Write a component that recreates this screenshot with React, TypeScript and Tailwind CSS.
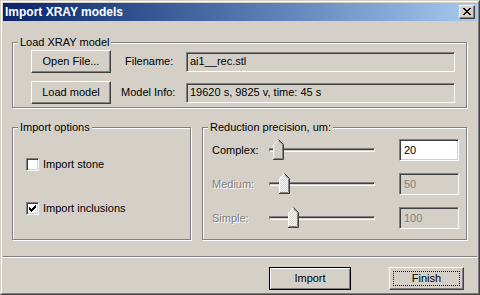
import React from "react";

const raised =
  "border border-t-white border-l-white border-r-[#404040] border-b-[#404040] shadow-[inset_-1px_-1px_0_#808080]";
const sunken =
  "border border-t-[#808080] border-l-[#808080] border-r-white border-b-white shadow-[inset_1px_1px_0_#404040,inset_-1px_-1px_0_#d4d0c8]";

function GroupBox({ label, className, children }: { label: string; className: string; children: React.ReactNode }) {
  return (
    <div className={`relative border border-[#808080] shadow-[1px_1px_0_#fff,inset_1px_1px_0_#fff] ${className}`}>
      <span className="absolute left-[5px] top-[-7px] bg-[#d4d0c8] px-[2px] leading-[13px]">{label}</span>
      {children}
    </div>
  );
}

function Thumb({ disabled, left }: { disabled?: boolean; left: string }) {
  return (
    <svg className={`absolute top-0 ${left}`} width="11" height="21" viewBox="0 0 11 21">
      <defs>
        <pattern id="dither" width="2" height="2" patternUnits="userSpaceOnUse">
          <rect width="2" height="2" fill="#d4d0c8" />
          <rect width="1" height="1" fill="#fff" />
          <rect x="1" y="1" width="1" height="1" fill="#fff" />
        </pattern>
      </defs>
      <polygon points="5.5,0.5 10.5,5.5 10.5,20.5 0.5,20.5 0.5,5.5" fill={disabled ? "url(#dither)" : "#d4d0c8"} />
      <polyline points="0.5,20 0.5,5.5 5.5,0.5" fill="none" stroke="#fff" />
      <polyline points="5.5,0.5 10.5,5.5 10.5,20.5 0,20.5" fill="none" stroke="#404040" />
      <polyline points="5.5,1.7 9.5,5.7 9.5,19.5 1,19.5" fill="none" stroke="#808080" />
    </svg>
  );
}

function SliderRow({
  label,
  value,
  thumb,
  disabled,
}: {
  label: string;
  value: string;
  thumb: string;
  disabled?: boolean;
}) {
  return (
    <div className="flex h-[22px] items-center">
      <div className={`w-[57px] ${disabled ? "text-[#808080] [text-shadow:1px_1px_0_#fff]" : ""}`}>{label}</div>
      {/* trackbar */}
      <div className="relative flex h-[22px] w-[106px] items-center">
        <div className="h-[4px] w-full border-t border-t-[#808080] border-b border-b-white border-l border-l-[#808080] border-r border-r-white shadow-[inset_0_1px_0_#404040]" />
        <Thumb disabled={disabled} left={thumb} />
      </div>
      <div
        className={`ml-[24px] flex h-[22px] w-[60px] items-center pl-[4px] ${sunken} ${
          disabled ? "bg-[#d4d0c8] text-[#808080]" : "bg-white"
        }`}
      >
        {value}
      </div>
    </div>
  );
}

function CheckBox({ label, checked }: { label: string; checked?: boolean }) {
  return (
    <div className="flex h-[13px] items-center">
      <div className={`relative h-[13px] w-[13px] bg-white ${sunken}`}>
        {checked && (
          <svg className="absolute left-[2px] top-[2px]" width="7" height="7" viewBox="0 0 7 7" shapeRendering="crispEdges">
            <path d="M0 2h1v3H0z M1 3h1v3H1z M2 4h1v3H2z M3 3h1v3H3z M4 2h1v3H4z M5 1h1v3H5z M6 0h1v3H6z" fill="#000" />
          </svg>
        )}
      </div>
      <span className="ml-[4px]">{label}</span>
    </div>
  );
}

export default function App() {
  return (
    <div className="h-[295px] w-[480px] border border-t-[#d4d0c8] border-l-[#d4d0c8] border-r-[#404040] border-b-[#404040] bg-[#d4d0c8] font-['Liberation_Sans',Arial,sans-serif] text-[11px] text-black">
      <div className="flex h-full flex-col border border-t-white border-l-white border-r-[#808080] border-b-[#808080] p-[1px]">
        {/* Title bar */}
        <div className="flex h-[18px] items-center justify-between bg-gradient-to-r from-[#0a246a] to-[#a6caf0] pl-[2px] pr-[2px]">
          <span className="text-[12px] font-bold leading-none text-white">Import XRAY models</span>
          <div className={`relative h-[14px] w-[16px] bg-[#d4d0c8] ${raised}`}>
            <svg className="absolute left-[3px] top-[2px]" width="8" height="7" viewBox="0 0 8 7" shapeRendering="crispEdges">
              <path
                d="M0 0h2v1H0z M6 0h2v1H6z M1 1h2v1H1z M5 1h2v1H5z M2 2h4v1H2z M3 3h2v1H3z M2 4h4v1H2z M1 5h2v1H1z M5 5h2v1H5z M0 6h2v1H0z M6 6h2v1H6z"
                fill="#000"
              />
            </svg>
          </div>
        </div>

        {/* Client area */}
        <div className="flex flex-1 flex-col">
          <div className="px-[9px] pt-[21px]">
            <GroupBox label="Load XRAY model" className="h-[66px] w-[455px] pl-[18px] pt-[7px]">
              <div className="flex flex-col gap-[8px]">
                <div className="flex h-[23px] items-center">
                  <div className={`flex h-[23px] w-[80px] items-center justify-center ${raised}`}>Open File...</div>
                  <div className="w-[75px] pl-[14px]">Filename:</div>
                  <div className={`flex h-[20px] w-[269px] items-center pl-[3px] ${sunken}`}>ai1__rec.stl</div>
                </div>
                <div className="flex h-[23px] items-center">
                  <div className={`flex h-[23px] w-[80px] items-center justify-center ${raised}`}>Load model</div>
                  <div className="w-[75px] pl-[10px]">Model Info:</div>
                  <div className={`flex h-[20px] w-[269px] items-center pl-[3px] ${sunken}`}>19620 s, 9825 v, time: 45 s</div>
                </div>
              </div>
            </GroupBox>

            <div className="mt-[19px] flex gap-[11px]">
              <GroupBox label="Import options" className="h-[113px] w-[179px] pl-[13px] pt-[30px]">
                <div className="flex flex-col gap-[31px]">
                  <CheckBox label="Import stone" />
                  <CheckBox label="Import inclusions" checked />
                </div>
              </GroupBox>
              <GroupBox label="Reduction precision, um:" className="h-[113px] w-[265px] pl-[9px] pt-[11px]">
                <div className="flex flex-col gap-[12px]">
                  <SliderRow label="Complex:" value="20" thumb="left-[4px]" />
                  <SliderRow label="Medium:" value="50" thumb="left-[10px]" disabled />
                  <SliderRow label="Simple:" value="100" thumb="left-[19px]" disabled />
                </div>
              </GroupBox>
            </div>
          </div>

          <div className="mt-[16px] h-[2px] border-t border-t-[#808080] border-b border-b-white" />

          <div className="mt-[9px] flex justify-end gap-[38px] pr-[13px]">
            <div className="flex h-[23px] w-[82px] items-center justify-center border border-black shadow-[inset_1px_1px_0_#fff,inset_-1px_-1px_0_#808080]">
              Import
            </div>
            <div className={`relative flex h-[23px] w-[75px] items-center justify-center ${raised}`}>
              <div className="absolute inset-[3px] border border-dotted border-black" />
              Finish
            </div>
          </div>
        </div>
      </div>
    </div>
  );
}
